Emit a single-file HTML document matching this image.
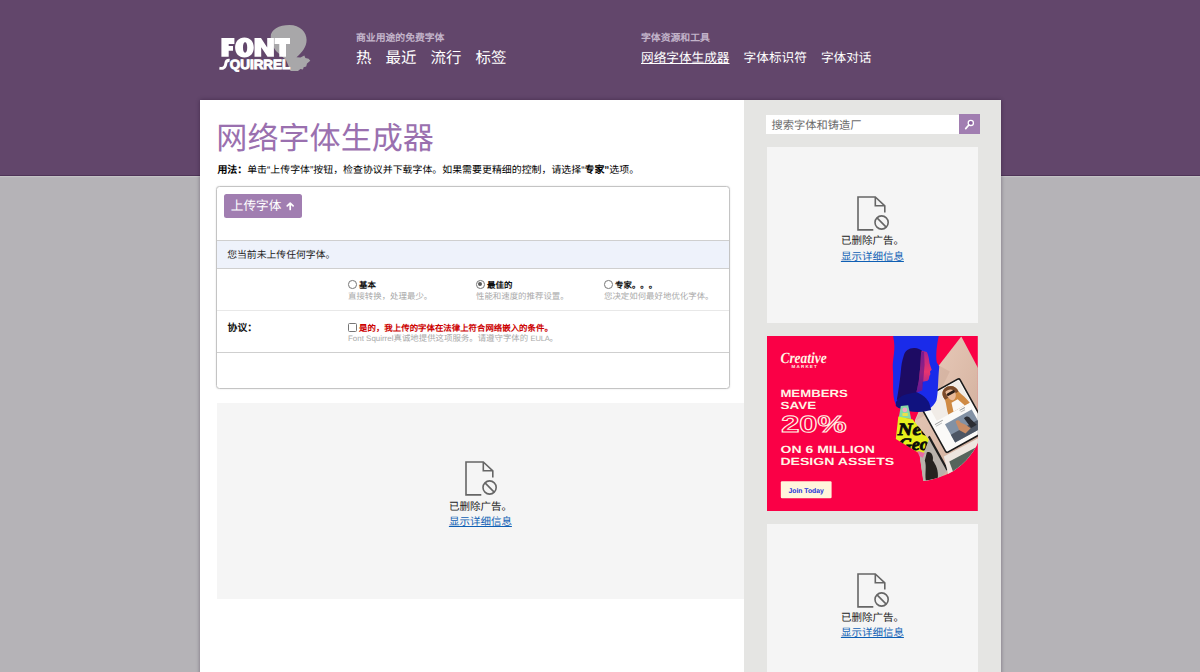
<!DOCTYPE html>
<html lang="zh-CN">
<head>
<meta charset="utf-8">
<title>网络字体生成器 | Font Squirrel</title>
<style>
*{box-sizing:border-box;margin:0;padding:0}
html,body{width:1200px;height:672px;overflow:hidden}
body{position:relative;background:#b5b3b7;font-family:"Liberation Sans",sans-serif;color:#000;-webkit-font-smoothing:antialiased;text-rendering:geometricPrecision}
a{color:inherit}
.abs{position:absolute;white-space:nowrap}
#hdr{position:absolute;left:0;top:0;width:1200px;height:175.5px;background:#62466b;border-bottom:1px solid #4f3458;box-shadow:0 1.2px 0 #c4c3c5}
#hdr .sub{position:absolute;font-size:9.84px;line-height:12px;color:#c3b4ca;font-weight:bold;white-space:nowrap}
#hdr .nav{position:absolute;font-size:15.47px;line-height:20px;color:#fff;white-space:nowrap}
#hdr .nav a{text-decoration:none;margin-right:14.06px;display:inline-block}
#hdr .nav2{position:absolute;font-size:12.65px;line-height:20px;color:#fff;white-space:nowrap}
#hdr .nav2 a{text-decoration:none;margin-right:14.06px;display:inline-block}
#hdr .nav2 a.on{text-decoration:underline}
#wrap{position:absolute;left:199.5px;top:99.7px;width:801.2px;height:600px;background:#fff;box-shadow:0 0 4px rgba(20,0,30,.38)}
#side{position:absolute;left:744.3px;top:99.7px;width:256.4px;height:600px;background:#e5e5e3}
h1{position:absolute;left:216.3px;top:118.9px;font-size:31.1px;line-height:40px;font-weight:300;color:#9a70af;white-space:nowrap;letter-spacing:0}
#usage{position:absolute;left:217.4px;top:164.2px;font-size:9.94px;line-height:14px;color:#000;white-space:nowrap}
#form{position:absolute;left:216px;top:186px;width:514px;height:202.5px;border:1px solid #c4c4c4;border-radius:3.5px;background:#fff;box-shadow:0 0 2px rgba(0,0,0,.12)}
#btn{position:absolute;left:224px;top:194px;width:77.5px;height:24px;border-radius:2.5px;background:#a17eb1;color:#fff;font-size:12.65px;line-height:25.4px;padding-left:6.8px;white-space:nowrap}
#none{position:absolute;left:217px;top:240px;width:512px;height:28.5px;background:#eef2fb;border-top:1px solid #cfcfcf;border-bottom:1px solid #cfcfcf;font-size:9.84px;line-height:26.6px;padding-top:2.2px;padding-left:10.2px;color:#222;white-space:nowrap}
.hl{position:absolute;left:217px;width:512px;height:1px;background:#e8e8e8}
.opt{position:absolute;top:279.75px;font-size:8.44px;line-height:11px;white-space:nowrap}
.opt b{color:#111}
.opt span.d{color:#a9a9a9}
.radio{display:inline-block;width:8.6px;height:8.6px;border:1px solid #767676;border-radius:50%;background:#fff;vertical-align:-1px;margin-right:2.5px;position:relative}
.radio.on:after{content:"";position:absolute;left:1.3px;top:1.3px;width:4px;height:4px;border-radius:50%;background:#5a5a5a}
.cb{display:inline-block;width:8.6px;height:8.6px;border:1px solid #767676;border-radius:1.5px;background:#fff;vertical-align:-1px;margin-right:2.5px}
.adbox{position:absolute;background:#f5f5f5}
.adph{position:absolute;width:80px;text-align:center;font-size:10.5px;line-height:15.5px;color:#222;white-space:nowrap}
.adph a{color:#0f5fb4;text-decoration:underline}
</style>
</head>
<body>
<div id="hdr">
  <svg class="abs" style="left:210px;top:18px" width="110" height="62" viewBox="210 18 110 62">
  <path fill="#a8a7a9" d="M270.7 37 C270.5 29.5 279 25 289.5 25 C300 25 306.6 32 306.6 40 C306.6 47 302 52.5 296.5 57.2 L300.5 57.6 L304.3 55.6 L305.4 58 L308.6 58.7 L310.3 60.7 L307 63.6 L306.2 66.4 L303.6 67.3 L303 69.6 L300.4 69 L298 70.9 L290.6 70.9 L286 60 L276 51 C272.5 46.5 270.8 42 270.7 37 Z"/>
  <g fill="#fff">
    <path d="M221.4 38 H234.4 V44 H228.7 V46 H233 V50.8 H228.7 V56.8 H221.4 Z"/>
    <path fill-rule="evenodd" d="M244.4 37.4 C250.2 37.4 253.8 41.6 253.8 47.4 C253.8 53.2 250.2 57.4 244.4 57.4 C238.7 57.4 235.1 53.2 235.1 47.4 C235.1 41.6 238.7 37.4 244.4 37.4 Z M245.1 42.3 C243.7 42.3 243 44.3 243 47.5 C243 50.7 243.7 52.7 245.1 52.7 C246.5 52.7 247.2 50.7 247.2 47.5 C247.2 44.3 246.5 42.3 245.1 42.3 Z"/>
    <path d="M254.5 38 H261 L267.2 47.6 V38 H273.9 V56.8 H267.5 L261.2 47.2 V56.8 H254.5 Z"/>
    <path d="M274.6 38 H290 V44 H286 V56.8 H279.3 V44 H274.6 Z"/>
    <path d="M219.6 66.8 C223.2 67.8 224 65.6 224.3 63.4 C224.8 60 226.6 58.6 229.8 58.9 L229.4 62 C227.8 61.8 227.4 62.6 227.2 64 C226.8 68 224.4 70.6 219.2 69.6 Z"/>
    <text x="229.8" y="69.1" font-family="Liberation Sans, sans-serif" font-weight="bold" font-size="13.4" stroke="#fff" stroke-width=".9" textLength="60.4" lengthAdjust="spacingAndGlyphs">QUIRREL</text>
  </g>
</svg>
  <div class="sub" style="left:356px;top:33.2px">商业用途的免费字体</div>
  <div class="nav" style="left:356px;top:48.9px"><a style="width:15.47px">热</a><a style="width:30.94px">最近</a><a style="width:30.94px">流行</a><a style="width:30.94px">标签</a></div>
  <div class="sub" style="left:641px;top:32.6px">字体资源和工具</div>
  <div class="nav2" style="left:641px;top:47.5px"><a class="on" style="width:88.55px">网络字体生成器</a><a style="width:63.25px">字体标识符</a><a style="width:50.6px">字体对话</a></div>
</div>
<div id="wrap"></div>
<div id="side"></div>

<h1>网络字体生成器</h1>
<div id="usage"><b>用法：</b>单击“上传字体”按钮，检查协议并下载字体。如果需要更精细的控制，请选择“<b>专家”</b>选项。</div>

<div id="form"></div>
<div id="btn">上传字体<svg style="position:absolute;left:62.4px;top:8.3px" width="8.4" height="8.4" viewBox="0 0 8.4 8.4" fill="none" stroke="#fff" stroke-width="1.7" stroke-linecap="round" stroke-linejoin="round"><path d="M4.2 7.4 V1.3 M1.3 3.9 L4.2 1.1 L7.1 3.9"/></svg></div>
<div id="none">您当前未上传任何字体。</div>
<div class="opt" style="left:348px"><span class="radio"></span><b>基本</b><br><span class="d">直接转换，处理最少。</span></div>
<div class="opt" style="left:476px"><span class="radio on"></span><b>最佳的</b><br><span class="d">性能和速度的推荐设置。</span></div>
<div class="opt" style="left:604px"><span class="radio"></span><b style="text-spacing-trim:space-all">专家。。。</b><br><span class="d">您决定如何最好地优化字体。</span></div>
<div class="hl" style="top:310px"></div>
<div class="abs" style="left:227.6px;top:321.5px;font-size:9.84px;line-height:13px;font-weight:bold;color:#111">协议：</div>
<div class="opt" style="left:348px;top:322.7px;line-height:10.2px"><span class="cb"></span><b style="color:#c00">是的，我上传的字体在法律上符合网络嵌入的条件。</b><br><span class="d"><span style="font-size:7.95px">Font Squirrel</span>真诚地提供这项服务。请遵守字体的 <span style="font-size:7.6px;letter-spacing:-.2px">EULA</span>。</span></div>
<div class="hl" style="top:352px;background:#cfcfcf"></div>

<div class="adbox" style="left:217px;top:403px;width:527.3px;height:195.5px"></div>
<div class="adbox" style="left:767.2px;top:147.3px;width:210.9px;height:176px"></div>
<svg class="abs" id="cm" style="left:767.2px;top:335.6px" width="210.9" height="175.8" viewBox="767.2 335.6 210.9 175.8">
  <defs>
    <clipPath id="adclip"><rect x="767.2" y="335.6" width="210.9" height="175.8"/></clipPath>
    <clipPath id="petal"><path d="M961.5 336 L979 369 L979 440 C975 452 962 467 949 473 C940 477 930 480 923.5 480.6 L920 456 L915 420 L939 365 Z"/></clipPath>
    <clipPath id="yel"><path d="M898.5 416 L913 419 L929 439 L923 455 L910 447 L896 438.5 Z"/></clipPath>
    <linearGradient id="bg1" x1="0" y1="0" x2="1" y2="1"><stop offset="0" stop-color="#ecd0c0"/><stop offset=".55" stop-color="#dcbba9"/><stop offset="1" stop-color="#c7a593"/></linearGradient>
    <linearGradient id="face" x1="0" y1="0" x2="0" y2="1"><stop offset="0" stop-color="#b0248c"/><stop offset=".5" stop-color="#e8346f"/><stop offset="1" stop-color="#8a1f9a"/></linearGradient>
  </defs>
  <g clip-path="url(#adclip)">
  <rect x="767.2" y="335.6" width="210.9" height="175.8" fill="#fa0046"/>
  <!-- beige petal with devices -->
  <g clip-path="url(#petal)">
    <rect x="910" y="335" width="70" height="150" fill="url(#bg1)"/>
    <path d="M939 365 L950 371 L930 412 L916 420 Z" fill="#c9a795" opacity=".45"/>
    <!-- lower devices -->
    <path d="M919 452 L931 438 L948 470 L938 479 L923 481 Z" fill="#b9b2ab"/>
    <path d="M927 452 C931 450 934 455 933 460 C936 464 939 470 938 478 L926 480 C925 472 927 466 925 460 Z" fill="#26221f"/>
    <path d="M929 436 L947.6 469.6" stroke="#1d1d1d" stroke-width="2.2"/>
    <path d="M944 456 L980 437 L980 470 L949 476 Z" fill="#eee6df"/>
    <path d="M949.5 461 L980 445 L980 470 L955 476 Z" fill="#56645c"/>
    <!-- main tablet -->
    <g transform="translate(916.9 400.6) rotate(-29)">
      <rect x="0" y="0" width="49" height="60.7" rx="2.6" fill="#1b1b1b"/>
      <rect x="1.6" y="1.6" width="45.8" height="57.5" rx="1.3" fill="#fbfaf8"/>
      <rect x="8" y="2.2" width="38.6" height="25" fill="#f1ece7"/>
      <path d="M30.5 2.6 C37 1.4 41.6 5.6 41.2 12 C42.6 17 45 22 45.6 27.2 L21 27.2 C22 22 24.6 17 25.4 12.6 C24.6 8 26 3.8 30.5 2.6 Z" fill="#cf8a44"/>
      <path d="M30.5 2.6 C37 1.4 41.6 5.6 41.2 12 L25.4 12.6 C24.6 8 26 3.8 30.5 2.6 Z" fill="#7a4a2a"/>
      <path d="M29.4 6 C32.6 4.6 37.6 6 38 10.6 C37.6 14.4 35 17.2 32.6 17 C29.8 16.6 28.4 12 29.4 6 Z" fill="#e8b999"/>
      <rect x="29.2" y="8.2" width="9" height="2.8" rx="1.3" fill="#2a1d18"/>
      <path d="M29.6 18.4 L36.6 18.4 L40 27.2 L27 27.2 Z" fill="#faf8f6"/>
      <rect x="4.5" y="29" width="9" height=".9" fill="#9a9a9a"/><rect x="4.5" y="31" width="7" height=".9" fill="#bdbdbd"/>
      <rect x="33" y="28.6" width="6" height=".9" fill="#9a9a9a"/><rect x="33" y="30.6" width="5" height=".9" fill="#bdbdbd"/>
      <rect x="13.5" y="34" width="30.5" height="21" fill="#8291a4"/>
      <rect x="13.5" y="46" width="30.5" height="9" fill="#4d5664"/>
      <path d="M24 37 C26.5 35.8 28.4 37.6 27.8 40 L31 44 L34 50 L27 52 L23 46 Z" fill="#c88d66"/>
      <path d="M33 38 C36 36.6 39 38.6 38.4 42 L41 50 L34.6 50 Z" fill="#2b2d33"/>
    </g>
  </g>
  <!-- blue blob with portrait -->
  <path d="M893.3 335.6 L938.9 335.6 C937 345 935.8 355 937 362 L939.5 366 C938 380 938.6 392 936.6 400 C933 408 925 412 915 411 C905 410 897 408 895.6 403 C892 395 894 380 893 368 C892.5 358 896.5 350 893.3 335.6 Z" fill="#1a2bea"/>
  <path d="M914.8 347.7 C909 347.5 905.5 350.5 904 355 C902 361 901.6 365 901.2 369 C900.6 376 899.8 382 899 387 C898.4 391 897.8 395 897 399.4 L915 402 C916 396 917.5 390 919.5 385 L921 381 L921.4 366 C921 359 921.5 354 923 351.2 C920.5 348.8 918 347.8 914.8 347.7 Z" fill="#1d0b63"/>
  <path d="M921.3 351.6 L922.4 350.4 L927 351.5 C928.4 354.4 929 357 929.3 359.5 L929.8 363 L931.9 369.3 L930.2 371 L930.6 373.8 L929.6 375.6 L929 378.8 C928.2 380.2 927.4 380.6 926.5 380.7 L922.8 381.3 L922.4 389.8 L916.5 392.4 L919 380.6 L920.6 365 Z" fill="url(#face)"/>
  <path d="M921.3 351.6 L924.2 351 L924.8 364 L923.4 381.2 L922.4 389.8 L916.5 392.4 L919 380.6 L920.6 365 Z" fill="#4b1291" opacity=".55"/>
  <path d="M896.2 401.6 C898 398.4 900.4 396.4 903 395 C908 393.4 913 392.4 917 391.8 C922.6 394 927.4 398 929.6 403 L931.4 409.6 C920 413 904 412 896 405.6 Z" fill="#10127f"/>
  <!-- small sticker above yellow -->
  <path d="M901 405.6 L908.4 404.8 L911.4 418.6 L899 417.4 Z" fill="#86d9a6"/>
  <circle cx="905" cy="409.4" r="2.4" fill="#f2a6c4"/><rect x="902.6" y="412.6" width="5.4" height="3" fill="#e9e34a"/>
  <!-- yellow Neo Geo card -->
  <path d="M898.5 416 L913 419 L929 439 L923 455 L910 447 L896 438.5 Z" fill="#e6f01c"/>
  <g clip-path="url(#yel)" fill="#0b0b0b" font-family="Liberation Serif, serif" font-weight="bold" font-style="italic" stroke="#0b0b0b" stroke-width=".8">
    <text x="898" y="434.6" font-size="17.5" textLength="34" lengthAdjust="spacingAndGlyphs">Neo</text>
    <text x="899" y="449.4" font-size="17.5" textLength="30" lengthAdjust="spacingAndGlyphs">Geo</text>
  </g>
  <path d="M917.4 450.4 L925 452.6 L923 457.4 L919.4 455.4 Z" fill="#e86aa2"/>
  <!-- copy -->
  <g fill="#fff4e4" font-family="Liberation Sans, sans-serif" font-weight="bold">
    <text x="780.6" y="362.2" font-family="Liberation Serif, serif" font-style="italic" font-size="15.6" textLength="46.4" lengthAdjust="spacingAndGlyphs">Creative</text>
    <text x="791.8" y="367.9" font-size="4.5" textLength="25.2" lengthAdjust="spacing">MARKET</text>
    <text x="780.6" y="396.9" font-size="10.5" textLength="67.4" lengthAdjust="spacingAndGlyphs">MEMBERS</text>
    <text x="780.8" y="409" font-size="10.5" textLength="35.6" lengthAdjust="spacingAndGlyphs">SAVE</text>
    <text x="781.4" y="431.8" font-size="23.4" fill="none" stroke="#fff4e4" stroke-width=".95" textLength="65.4" lengthAdjust="spacingAndGlyphs">20%</text>
    <text x="780.8" y="452.8" font-size="10.5" textLength="94.2" lengthAdjust="spacingAndGlyphs">ON 6 MILLION</text>
    <text x="780.6" y="464.3" font-size="10.5" textLength="113.8" lengthAdjust="spacingAndGlyphs">DESIGN ASSETS</text>
  </g>
  <rect x="781" y="480.8" width="50.8" height="17" rx="1.2" fill="#fff6dc"/>
  <text x="788.7" y="492.3" font-family="Liberation Sans, sans-serif" font-weight="bold" font-size="6.9" fill="#2431d6" textLength="35.3" lengthAdjust="spacingAndGlyphs">Join Today</text>
  </g>
</svg>
<div class="adbox" style="left:767.2px;top:523.8px;width:210.9px;height:176px"></div>
<div class="abs" id="q" style="left:766px;top:115px;width:193px;height:19.3px;background:#fff;font-size:11.25px;line-height:23.4px;overflow:hidden;padding-left:5.4px;color:#6b6b6b">搜索字体和铸造厂</div>
<div class="abs" style="left:959px;top:114.3px;width:20.8px;height:20.2px;background:#a17eb1">
  <svg width="20.8" height="20.2" viewBox="959 114.3 20.8 20.2"><circle cx="970.8" cy="123.2" r="2.6" fill="#8a5fa0" stroke="#fff" stroke-width="1.3"/><path d="M968.8 125.3 L965.7 128.9" stroke="#fff" stroke-width="1.7" stroke-linecap="round"/></svg>
</div>
<svg class="abs" style="left:464.0px;top:460.4px" width="36" height="38" viewBox="-2 -2 36 38" fill="none" stroke="#666" stroke-width="1.6"><path d="M15.3 32.9 H0 V0 H17.3 L26.8 8.8 V15.6 M17.3 0 V8.8 H26.8"/><circle cx="23.6" cy="25.5" r="6.6"/><path d="M19 20.9 L28.2 30.1"/></svg>
<div class="adph" style="left:440.4px;top:499.8px">已删除广告。<br><a>显示详细信息</a></div>
<svg class="abs" style="left:856.0px;top:195.0px" width="36" height="38" viewBox="-2 -2 36 38" fill="none" stroke="#666" stroke-width="1.6"><path d="M15.3 32.9 H0 V0 H17.3 L26.8 8.8 V15.6 M17.3 0 V8.8 H26.8"/><circle cx="23.6" cy="25.5" r="6.6"/><path d="M19 20.9 L28.2 30.1"/></svg>
<div class="adph" style="left:832.4px;top:234.4px">已删除广告。<br><a>显示详细信息</a></div>
<svg class="abs" style="left:856.0px;top:571.5px" width="36" height="38" viewBox="-2 -2 36 38" fill="none" stroke="#666" stroke-width="1.6"><path d="M15.3 32.9 H0 V0 H17.3 L26.8 8.8 V15.6 M17.3 0 V8.8 H26.8"/><circle cx="23.6" cy="25.5" r="6.6"/><path d="M19 20.9 L28.2 30.1"/></svg>
<div class="adph" style="left:832.4px;top:610.9px">已删除广告。<br><a>显示详细信息</a></div>
</body>
</html>
